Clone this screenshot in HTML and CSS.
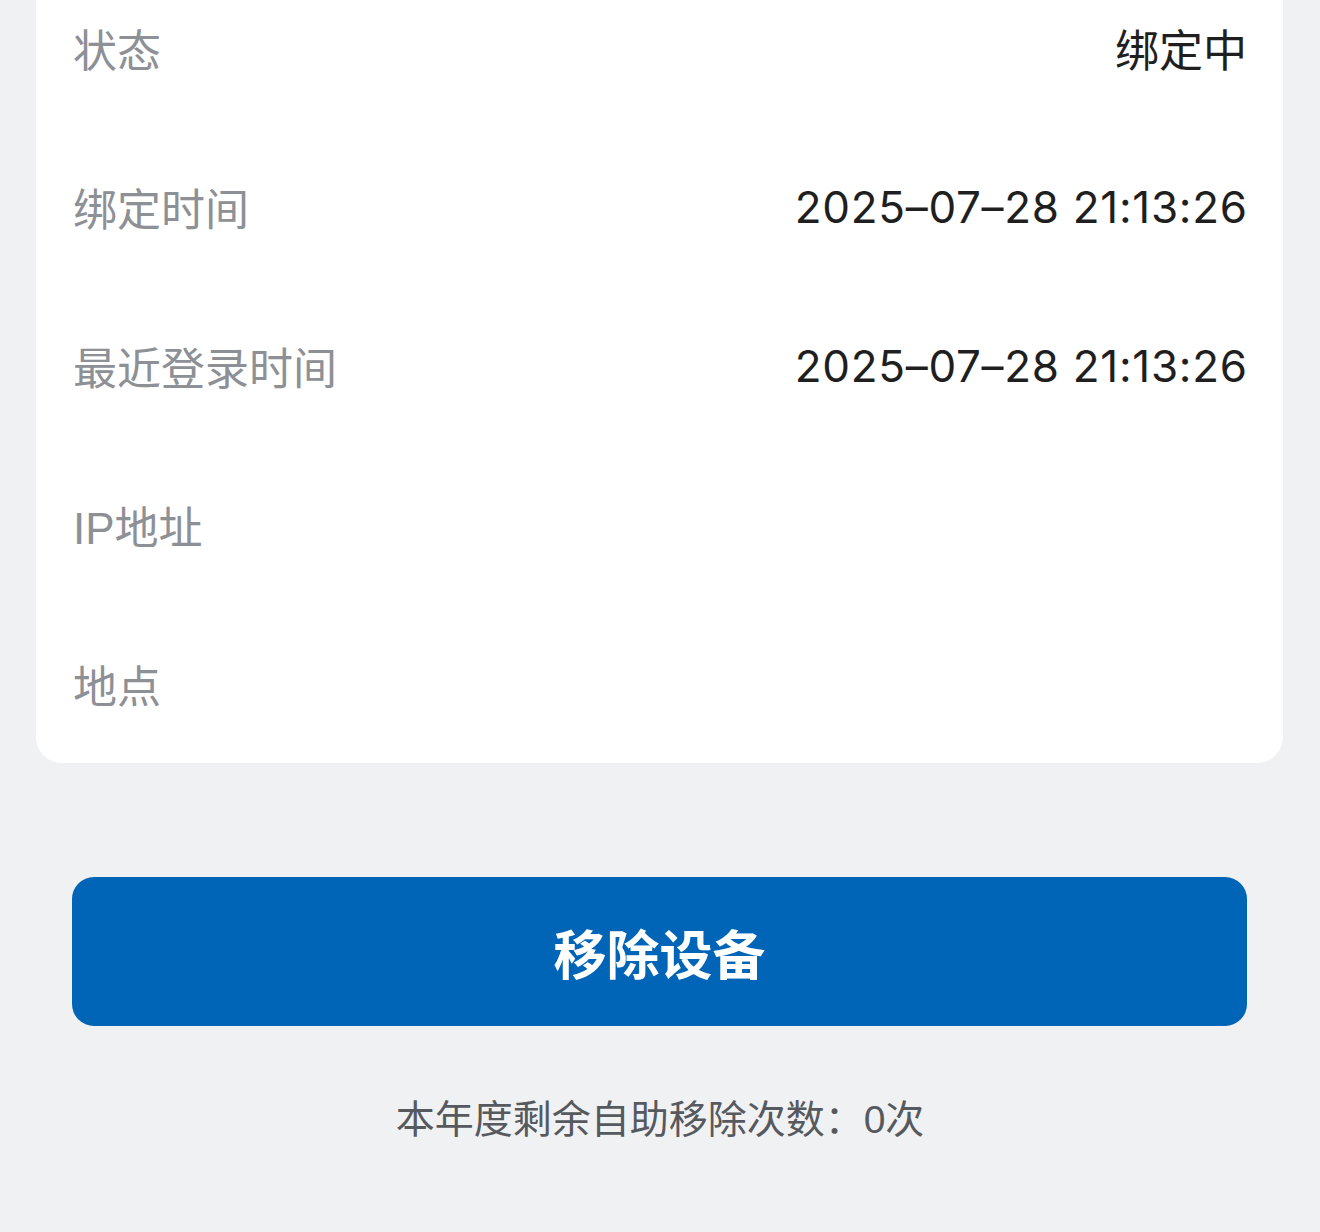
FILE: index.html
```html
<!DOCTYPE html>
<html lang="zh-CN">
<head>
  <meta charset="UTF-8" />
  <meta name="viewport" content="width=device-width, initial-scale=1.0"/>
  <title>设备详情</title>
  <link rel="stylesheet" href="styles.css">
</head>
<body>

  <div class="card">
    <div class="row">
      <span class="label">状态</span>
      <span class="value">绑定中</span>
    </div>
    <div class="row">
      <span class="label">绑定时间</span>
      <span class="value date">2025–07–28 21:13:26</span>
    </div>
    <div class="row">
      <span class="label">最近登录时间</span>
      <span class="value date">2025–07–28 21:13:26</span>
    </div>
    <div class="row">
      <span class="label">IP地址</span>
      <span class="value"></span>
    </div>
    <div class="row">
      <span class="label">地点</span>
      <span class="value"></span>
    </div>
  </div>

  <button class="remove-btn">移除设备</button>

  <p class="tip">本年度剩余自助移除次数：0次</p>

</body>
</html>
```

FILE: styles.css
```css
body {
  font-family: "Liberation Sans", "Noto Sans CJK SC", sans-serif;
  margin: 0;
  background-color: #f0f1f3;
}

.card {
  background: white;
  margin: -32px 37px 0 36px;
  padding: 0 36px 0 37px;
  border-radius: 0 0 26px 26px;
}

.row {
  height: 159px;
  display: flex;
  align-items: center;
  justify-content: space-between;
  font-size: 44px;
}

.label {
  color: #8d9095;
}

.value {
  font-family: "Inter", "Noto Sans CJK SC", sans-serif;
  color: #1f1f1f;
}

.date {
  letter-spacing: 0.7px;
  margin-right: -0.7px;
  font-feature-settings: "calt" 0;
}

.remove-btn {
  display: block;
  width: 1175px;
  height: 149px;
  margin: 114px 0 0 72px;
  border: none;
  border-radius: 22px;
  background-color: #0064b7;
  color: white;
  font-family: "Noto Sans CJK SC", sans-serif;
  font-size: 53px;
  font-weight: bold;
  cursor: pointer;
}

.tip {
  margin: 74px 0 0;
  text-align: center;
  font-size: 39px;
  line-height: 1;
  color: #56595e;
}
```
